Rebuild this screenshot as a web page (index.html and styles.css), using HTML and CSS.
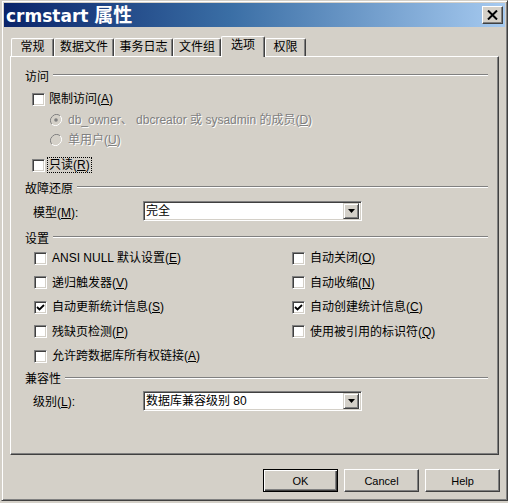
FILE: index.html
```html
<!DOCTYPE html>
<html lang="zh-CN">
<head>
<meta charset="utf-8">
<title>crmstart 属性</title>
<link rel="stylesheet" href="styles.css">
</head>
<body>
<div class="win">
  <div class="title">
    <span class="title-text">crmstart <span class="title-cjk">属性</span></span>
    <button class="close" aria-label="关闭">
      <svg width="11" height="10" viewBox="0 0 11 10"><path d="M1 0.5 L10 9.5 M10 0.5 L1 9.5" stroke="#000" stroke-width="2" fill="none"/></svg>
    </button>
  </div>

  <div class="tabs">
    <div class="tab w43">常规</div>
    <div class="tab w60">数据文件</div>
    <div class="tab w59">事务日志</div>
    <div class="tab w48">文件组</div>
    <div class="tab sel w44">选项</div>
    <div class="tab w41">权限</div>
  </div>

  <div class="panel">
    <div class="group">访问</div>
    <div class="row r-access">
      <span class="cb"></span><span class="txt">限制访问(<u>A</u>)</span>
    </div>
    <div class="row radio r-radio1">
      <svg class="rd" width="12" height="12" viewBox="0 0 12 12">
        <path d="M10.2 1.8 A6 6 0 0 0 1.8 10.2" stroke="#808080" fill="none"/>
        <path d="M1.8 10.2 A6 6 0 0 0 10.2 1.8" stroke="#fff" fill="none"/>
        <circle cx="6" cy="6" r="4.5" fill="#d4d0c8"/>
        <circle cx="6" cy="6" r="1.8" fill="#808080"/>
      </svg>
      <span class="txt dis">db_owner、 dbcreator 或 sysadmin 的成员(<u>D</u>)</span>
    </div>
    <div class="row radio r-radio2">
      <svg class="rd" width="12" height="12" viewBox="0 0 12 12">
        <path d="M10.2 1.8 A6 6 0 0 0 1.8 10.2" stroke="#808080" fill="none"/>
        <path d="M1.8 10.2 A6 6 0 0 0 10.2 1.8" stroke="#fff" fill="none"/>
        <circle cx="6" cy="6" r="4.5" fill="#d4d0c8"/>
      </svg>
      <span class="txt dis">单用户(<u>U</u>)</span>
    </div>
    <div class="row r-ro">
      <span class="cb"></span><span class="txt focus">只读(<u>R</u>)</span>
    </div>

    <div class="group g-recovery">故障还原</div>
    <div class="row field r-model">
      <span class="lbl">模型(<u>M</u>):</span>
      <div class="combo">
        <span class="combo-val">完全</span>
        <span class="drop"><svg width="7" height="4" viewBox="0 0 7 4"><path d="M0 0 H7 L3.5 4 Z" fill="#000"/></svg></span>
      </div>
    </div>

    <div class="group g-settings">设置</div>
    <div class="grid">
      <div class="row"><span class="cb"></span><span class="txt">ANSI NULL 默认设置(<u>E</u>)</span></div>
      <div class="row"><span class="cb"></span><span class="txt">自动关闭(<u>O</u>)</span></div>
      <div class="row"><span class="cb"></span><span class="txt">递归触发器(<u>V</u>)</span></div>
      <div class="row"><span class="cb"></span><span class="txt">自动收缩(<u>N</u>)</span></div>
      <div class="row"><span class="cb on"><svg width="9" height="9" viewBox="0 0 9 9"><path d="M1 4 L3.5 6.5 L8 2" stroke="#000" stroke-width="1.8" fill="none"/></svg></span><span class="txt">自动更新统计信息(<u>S</u>)</span></div>
      <div class="row"><span class="cb on"><svg width="9" height="9" viewBox="0 0 9 9"><path d="M1 4 L3.5 6.5 L8 2" stroke="#000" stroke-width="1.8" fill="none"/></svg></span><span class="txt">自动创建统计信息(<u>C</u>)</span></div>
      <div class="row"><span class="cb"></span><span class="txt">残缺页检测(<u>P</u>)</span></div>
      <div class="row"><span class="cb"></span><span class="txt">使用被引用的标识符(<u>Q</u>)</span></div>
      <div class="row"><span class="cb"></span><span class="txt">允许跨数据库所有权链接(<u>A</u>)</span></div>
    </div>

    <div class="group g-compat">兼容性</div>
    <div class="row field r-level">
      <span class="lbl">级别(<u>L</u>):</span>
      <div class="combo">
        <span class="combo-val">数据库兼容级别 80</span>
        <span class="drop"><svg width="7" height="4" viewBox="0 0 7 4"><path d="M0 0 H7 L3.5 4 Z" fill="#000"/></svg></span>
      </div>
    </div>
  </div>

  <div class="buttons">
    <button class="btn default">OK</button>
    <button class="btn">Cancel</button>
    <button class="btn">Help</button>
  </div>
</div>
</body>
</html>
```

FILE: styles.css
```css
html, body {
  margin: 0;
  padding: 0;
  background: #d4d0c8;
  overflow: hidden;
}

body {
  width: 508px;
  height: 503px;
  font-family: "Liberation Sans", "Noto Sans CJK SC", sans-serif;
  font-size: 12px;
  color: #000;
}

.win {
  margin-left: 1px;
  width: 507px;
  height: 501px;
  box-sizing: border-box;
  border: 1px solid;
  border-color: #d4d0c8 #404040 #404040 #d4d0c8;
  box-shadow: inset 1px 1px #fff, inset -1px -1px #808080;
  padding: 2px;
  display: flex;
  flex-direction: column;
}

/* title bar */
.title {
  height: 24px;
  flex: none;
  display: flex;
  align-items: center;
  justify-content: space-between;
  padding: 0 2px 0 2px;
  background: linear-gradient(to right, #0a246a 0%, #3a6ea5 45%, #a6caf0 100%);
  color: #fff;
}

.title-text {
  font-family: "DejaVu Sans", "Noto Sans CJK SC", sans-serif;
  font-weight: bold;
  font-size: 17px;
  line-height: 24px;
}

.title-cjk {
  font-family: "Noto Sans CJK SC", sans-serif;
  font-size: 19px;
}

.close {
  width: 21px;
  height: 18px;
  padding: 0;
  box-sizing: border-box;
  background: #d4d0c8;
  border: 1px solid;
  border-color: #fff #404040 #404040 #fff;
  box-shadow: inset -1px -1px #808080;
  display: flex;
  align-items: center;
  justify-content: center;
}

/* tabs */
.tabs {
  margin-top: 9px;
  height: 20px;
  flex: none;
  padding-left: 7px;
  display: flex;
  align-items: flex-end;
  position: relative;
  z-index: 1;
}

.tab {
  height: 18px;
  box-sizing: border-box;
  border-top: 1px solid #fff;
  border-left: 1px solid #fff;
  border-right: 1px solid #404040;
  border-radius: 2px 2px 0 0;
  box-shadow: inset -1px 0 #808080;
  text-align: center;
  line-height: 17px;
  background: #d4d0c8;
}

.tab.sel {
  height: 21px;
  margin-bottom: -1px;
  line-height: 17px;
}

.w43 { width: 43px; }
.w60 { width: 60px; }
.w59 { width: 59px; }
.w48 { width: 48px; }
.w44 { width: 44px; }
.w41 { width: 41px; }

/* panel */
.panel {
  margin: 0 6px;
  height: 399px;
  flex: none;
  box-sizing: border-box;
  border: 1px solid;
  border-color: #fff #404040 #404040 #fff;
  box-shadow: inset -1px -1px #808080;
  padding: 9px 10px 0 14px;
  display: flex;
  flex-direction: column;
}

.group {
  height: 18px;
  flex: none;
  display: flex;
  align-items: center;
}

.group::after {
  content: "";
  flex: 1;
  height: 0;
  border-top: 1px solid #808080;
  border-bottom: 1px solid #fff;
  margin-left: 4px;
}

.row {
  height: 22px;
  flex: none;
  display: flex;
  align-items: center;
  padding-left: 7px;
  white-space: nowrap;
}

.r-access { margin-top: 4px; }
.r-radio1 { height: 21px; margin-top: -1px; }
.r-radio2 { height: 20px; }
.r-ro { margin-top: 4px; }
.g-recovery { margin-top: 2px; }
.r-model { margin-top: 4px; }
.g-settings { margin-top: 6px; }
.g-compat { margin-top: 0; }
.r-level { margin-top: 3px; }

.radio { padding-left: 25px; }

.cb {
  width: 13px;
  height: 13px;
  flex: none;
  box-sizing: border-box;
  background: #fff;
  border: 1px solid;
  border-color: #808080 #fff #fff #808080;
  box-shadow: inset 1px 1px #404040, inset -1px -1px #d4d0c8;
  display: flex;
  align-items: center;
  justify-content: center;
}

.cb svg { display: block; }

.txt {
  margin-left: 4px;
  line-height: 14px;
}

.rd {
  flex: none;
  display: block;
}

.radio .txt { margin-left: 6px; }

.dis {
  color: #808080;
  text-shadow: 1px 1px #fff;
}

.focus {
  outline: 1px dotted #000;
  padding: 0 1px;
  margin-left: 3px;
}

.field { padding-left: 8px; }

.lbl {
  width: 110px;
  flex: none;
}

.combo {
  width: 219px;
  height: 20px;
  box-sizing: border-box;
  background: #fff;
  border: 1px solid;
  border-color: #808080 #fff #fff #808080;
  box-shadow: inset 1px 1px #404040, inset -1px -1px #d4d0c8;
  padding: 2px 2px 2px 2px;
  display: flex;
  align-items: center;
  justify-content: space-between;
}

.combo-val {
  line-height: 14px;
  padding-left: 0;
}

.drop {
  width: 16px;
  height: 16px;
  box-sizing: border-box;
  background: #d4d0c8;
  border: 1px solid;
  border-color: #d4d0c8 #404040 #404040 #d4d0c8;
  box-shadow: inset 1px 1px #fff, inset -1px -1px #808080;
  display: flex;
  align-items: center;
  justify-content: center;
}

.drop svg { display: block; }

.grid {
  display: grid;
  grid-template-columns: 258px 1fr;
  grid-auto-rows: 24.5px;
  flex: none;
}

.grid .row {
  height: auto;
  padding-left: 9px;
}

.grid .txt { margin-left: 5px; }

/* buttons */
.buttons {
  margin-top: 14px;
  margin-right: 5px;
  display: flex;
  justify-content: flex-end;
  gap: 6px;
}

.btn {
  width: 75px;
  height: 23px;
  padding: 0;
  box-sizing: border-box;
  background: #d4d0c8;
  font-family: "Liberation Sans", sans-serif;
  font-size: 11px;
  color: #000;
  border: 1px solid;
  border-color: #fff #404040 #404040 #fff;
  box-shadow: inset -1px -1px #808080;
}

.btn.default {
  border: 1px solid #000;
  box-shadow: inset 1px 1px #fff, inset -1px -1px #404040, inset -2px -2px #808080;
}
```
